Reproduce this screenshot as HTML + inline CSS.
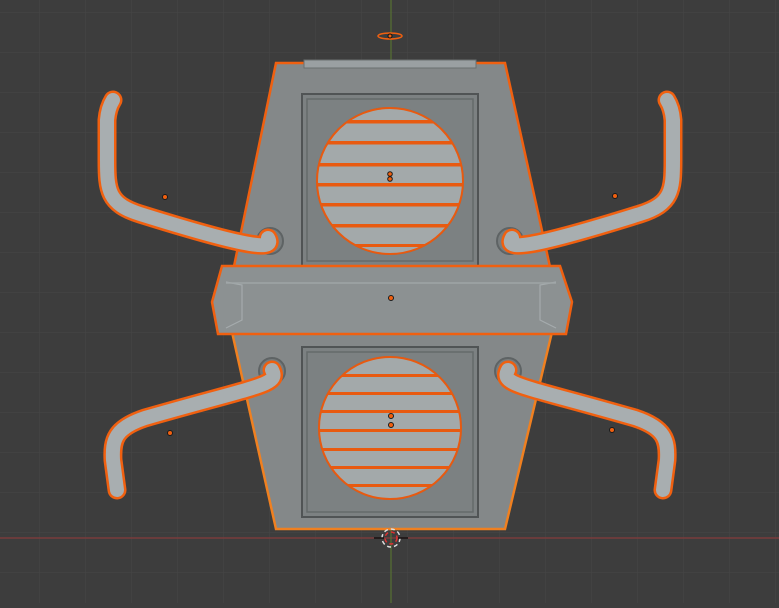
<!DOCTYPE html>
<html><head><style>html,body{margin:0;padding:0;background:#3d3d3d;overflow:hidden}</style></head>
<body>
<svg width="779" height="603" viewBox="0 0 779 603" xmlns="http://www.w3.org/2000/svg">
<defs>
<pattern id="g" width="46" height="40" patternUnits="userSpaceOnUse" x="-7" y="12">
<path d="M0 0H46M0 0V40" stroke="#474747" stroke-width="1" fill="none"/>
</pattern>
<clipPath id="c1"><circle cx="390" cy="181" r="73"/></clipPath>
<clipPath id="c2"><circle cx="390" cy="428" r="71"/></clipPath>
</defs>
<rect width="779" height="603" fill="#3d3d3d"/>
<rect width="779" height="603" fill="url(#g)"/>
<line x1="0" y1="538" x2="779" y2="538" stroke="#7a3c3c" stroke-width="1.5"/>
<line x1="391" y1="0" x2="391" y2="603" stroke="#5a7a30" stroke-width="1"/>

<!-- bottom body -->
<polygon points="232,332 552,332 505,529 276,529" fill="#848889" stroke="#f08020" stroke-width="2.5"/>
<!-- top body -->
<polygon points="276,63 505,63 552,276 232,276" fill="#848889" stroke="#f06010" stroke-width="2.5"/>
<rect x="304" y="60" width="172" height="8" fill="#9aa0a2" stroke="#6a6f70"/>
<!-- rings -->
<circle cx="270" cy="241" r="13" fill="#777c7d" stroke="#5e6364" stroke-width="2"/>
<circle cx="510" cy="241" r="13" fill="#777c7d" stroke="#5e6364" stroke-width="2"/>
<circle cx="272" cy="371" r="13" fill="#777c7d" stroke="#5e6364" stroke-width="2"/>
<circle cx="508" cy="371" r="13" fill="#777c7d" stroke="#5e6364" stroke-width="2"/>

<!-- panels -->
<rect x="302" y="94" width="176" height="172" fill="#7c8182" stroke="#505455" stroke-width="2"/>
<rect x="307" y="99" width="166" height="162" fill="none" stroke="#656a6b" stroke-width="1.5"/>
<rect x="302" y="347" width="176" height="170" fill="#7c8182" stroke="#505455" stroke-width="2"/>
<rect x="307" y="352" width="166" height="160" fill="none" stroke="#656a6b" stroke-width="1.5"/>

<!-- circles -->
<circle cx="390" cy="181" r="74" fill="#6a6f70"/>
<g clip-path="url(#c1)">
<rect x="300" y="100" width="180" height="170" fill="#a3a9aa"/>
<g fill="#e85a10">
<rect x="300" y="120" width="180" height="3.5"/><rect x="300" y="141" width="180" height="3.5"/>
<rect x="300" y="163" width="180" height="3.5"/><rect x="300" y="183" width="180" height="3.5"/>
<rect x="300" y="203" width="180" height="3.5"/><rect x="300" y="224" width="180" height="3.5"/>
<rect x="300" y="244" width="180" height="3"/>
</g>
</g>
<circle cx="390" cy="181" r="73" fill="none" stroke="#e85a10" stroke-width="2"/>
<circle cx="390" cy="428" r="72" fill="#6a6f70"/>
<g clip-path="url(#c2)">
<rect x="300" y="350" width="180" height="160" fill="#a3a9aa"/>
<g fill="#e85a10">
<rect x="300" y="374" width="180" height="3"/><rect x="300" y="392" width="180" height="3"/>
<rect x="300" y="410" width="180" height="3"/><rect x="300" y="429" width="180" height="3"/>
<rect x="300" y="448" width="180" height="3"/><rect x="300" y="466" width="180" height="3"/>
<rect x="300" y="484" width="180" height="3"/>
</g>
</g>
<circle cx="390" cy="428" r="71" fill="none" stroke="#e85a10" stroke-width="2"/>

<!-- handles in front -->
<g fill="none" stroke-linecap="round" stroke-linejoin="round">
<path d="M268,238 C275,250 255,250 140,214 C108,204 107,190 107,160 L107,120 Q108,108 113,100" stroke="#f06010" stroke-width="19"/>
<path d="M268,238 C275,250 255,250 140,214 C108,204 107,190 107,160 L107,120 Q108,108 113,100" stroke="#a8aeb0" stroke-width="14"/>
<path d="M512,238 C505,250 525,250 640,214 C672,204 673,190 673,160 L673,120 Q672,108 667,100" stroke="#f06010" stroke-width="19"/>
<path d="M512,238 C505,250 525,250 640,214 C672,204 673,190 673,160 L673,120 Q672,108 667,100" stroke="#a8aeb0" stroke-width="14"/>
<path d="M272,370 C280,385 260,385 145,418 C115,428 112,440 113,460 L117,490" stroke="#f06010" stroke-width="19"/>
<path d="M272,370 C280,385 260,385 145,418 C115,428 112,440 113,460 L117,490" stroke="#a8aeb0" stroke-width="14"/>
<path d="M508,370 C500,385 520,385 635,418 C665,428 668,440 667,460 L663,490" stroke="#f06010" stroke-width="19"/>
<path d="M508,370 C500,385 520,385 635,418 C665,428 668,440 667,460 L663,490" stroke="#a8aeb0" stroke-width="14"/>
</g>

<!-- middle band -->
<polygon points="222,266 560,266 572,302 566,334 218,334 212,302" fill="#8c9192" stroke="#f06010" stroke-width="2.5"/>
<polyline points="226,282 242,285 242,320 226,328" fill="none" stroke="#a5abad" stroke-width="1.2"/>
<polyline points="556,282 540,285 540,320 556,328" fill="none" stroke="#a5abad" stroke-width="1.2"/>
<line x1="226" y1="283" x2="556" y2="283" stroke="#9fa5a6" stroke-width="1.5"/>

<!-- dots -->
<g fill="#f06010" stroke="#1a1a1a" stroke-width="1">
<circle cx="165" cy="197" r="2.5"/><circle cx="615" cy="196" r="2.5"/>
<circle cx="170" cy="433" r="2.5"/><circle cx="612" cy="430" r="2.5"/>
<circle cx="391" cy="298" r="2.5"/><circle cx="390" cy="174" r="2.3"/><circle cx="390" cy="179" r="2.3"/>
<circle cx="391" cy="416" r="2.5"/><circle cx="391" cy="425" r="2.5"/>
</g>
<ellipse cx="390" cy="36" rx="12" ry="3" fill="none" stroke="#f06010" stroke-width="1.5"/>
<circle cx="390" cy="36" r="2" fill="#f06010" stroke="#111"/>
<circle cx="391" cy="538" r="9" fill="none" stroke="#ddd" stroke-width="1.5" stroke-dasharray="4 3"/>
<circle cx="391" cy="538" r="6" fill="none" stroke="#e03030" stroke-width="1.5" stroke-dasharray="4 3"/>
<line x1="374" y1="538" x2="384" y2="538" stroke="#111" stroke-width="1.5"/>
<line x1="398" y1="538" x2="408" y2="538" stroke="#111" stroke-width="1.5"/>
</svg>
</body></html>
